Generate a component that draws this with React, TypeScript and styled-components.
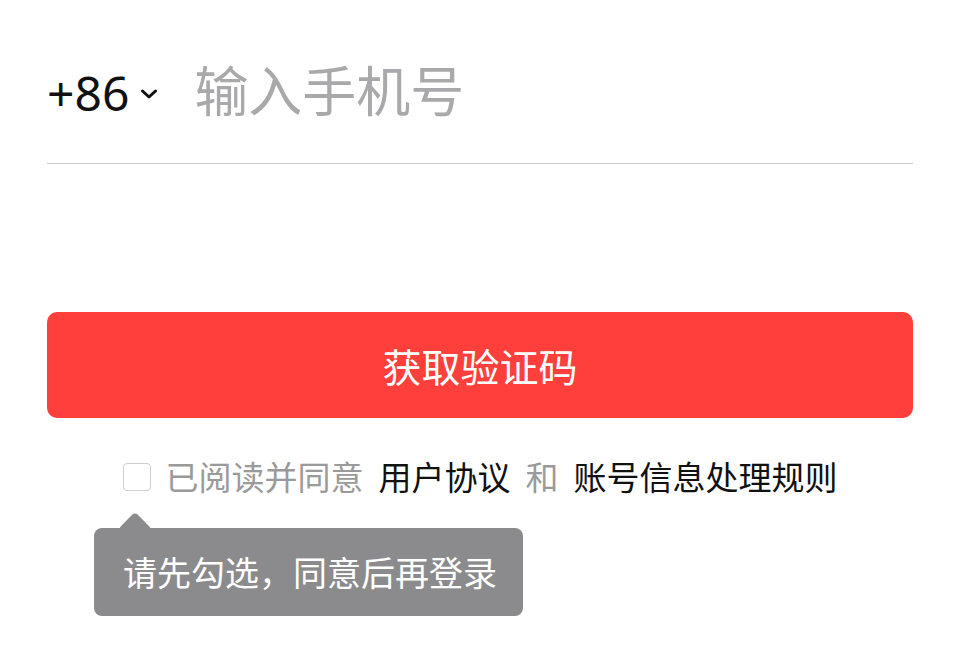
import styled, { createGlobalStyle } from 'styled-components';

const GlobalStyle = createGlobalStyle`
  html, body {
    margin: 0;
    padding: 0;
    background: #ffffff;
  }
  body {
    font-family: "Noto Sans", "Noto Sans CJK SC", sans-serif;
  }
`;

function App() {
  return (
    <>
      <GlobalStyle />
      <Page>
        <PhoneRow>
          <AreaCode>
            +86
            <Chevron width="18" height="10" viewBox="0 0 18 10">
              <path d="M2.5 2 L9 8 L15.5 2" fill="none" stroke="#111" strokeWidth="3" strokeLinecap="round" strokeLinejoin="round" />
            </Chevron>
          </AreaCode>
          <PhoneInput placeholder="输入手机号" />
        </PhoneRow>

        <SubmitButton>获取验证码</SubmitButton>

        <AgreementRow>
          <Checkbox />
          <AgreeText>已阅读并同意</AgreeText>
          <AgreeText $link>用户协议</AgreeText>
          <AgreeText>和</AgreeText>
          <AgreeText $link>账号信息处理规则</AgreeText>
        </AgreementRow>

        <Tooltip>
          <TooltipArrow />
          <TooltipText>请先勾选，同意后再登录</TooltipText>
        </Tooltip>
      </Page>
    </>
  );
}

export default App;

const Page = styled.main`
  padding: 0 47px;
  display: flex;
  flex-direction: column;
`;

const PhoneRow = styled.div`
  display: flex;
  align-items: center;
  height: 164px;
  padding-top: 14px;
  box-sizing: border-box;
  border-bottom: 1px solid #c8c8ca;
`;

const AreaCode = styled.div`
  display: flex;
  align-items: center;
  font-family: "Noto Sans", sans-serif;
  font-size: 48px;
  color: #111111;
  padding-top: 8px;
`;

const Chevron = styled.svg`
  margin-left: 11px;
  margin-top: 2px;
`;

const PhoneInput = styled.input`
  margin-left: 36px;
  flex: 1;
  border: none;
  outline: none;
  background: transparent;
  padding: 0;
  font-family: "Noto Sans CJK SC", sans-serif;
  font-size: 54px;
  color: #111111;
  &::placeholder {
    color: #a9a9ab;
  }
`;

const SubmitButton = styled.button`
  margin-top: 148px;
  height: 106px;
  border: none;
  border-radius: 10px;
  background: #ff3f3b;
  color: #ffffff;
  font-family: "Noto Sans CJK SC", sans-serif;
  font-size: 39px;
  cursor: pointer;
`;

const AgreementRow = styled.div`
  margin-top: 39px;
  display: flex;
  align-items: center;
  justify-content: center;
  gap: 15px;
`;

const Checkbox = styled.span`
  display: block;
  width: 26px;
  height: 26px;
  border: 1.5px solid #cfcfcf;
  border-radius: 4px;
`;

const AgreeText = styled.span<{ $link?: boolean }>`
  font-family: "Noto Sans CJK SC", sans-serif;
  font-size: 33px;
  line-height: 1.2;
  color: ${(p) => (p.$link ? '#111111' : '#9a9a9a')};
`;

const Tooltip = styled.div`
  position: relative;
  align-self: flex-start;
  margin-left: 47px;
  margin-top: 31px;
  width: 429px;
  height: 88px;
  box-sizing: border-box;
  padding-left: 29px;
  display: flex;
  align-items: center;
  background: #8b8b8d;
  border-radius: 8px;
`;

const TooltipText = styled.span`
  position: relative;
  color: #ffffff;
  font-family: "Noto Sans CJK SC", sans-serif;
  font-size: 34px;
  white-space: nowrap;
`;

const TooltipArrow = styled.span`
  position: absolute;
  left: 29px;
  top: -11px;
  width: 24px;
  height: 24px;
  background: #8b8b8d;
  border-radius: 4px;
  transform: rotate(45deg);
`;
